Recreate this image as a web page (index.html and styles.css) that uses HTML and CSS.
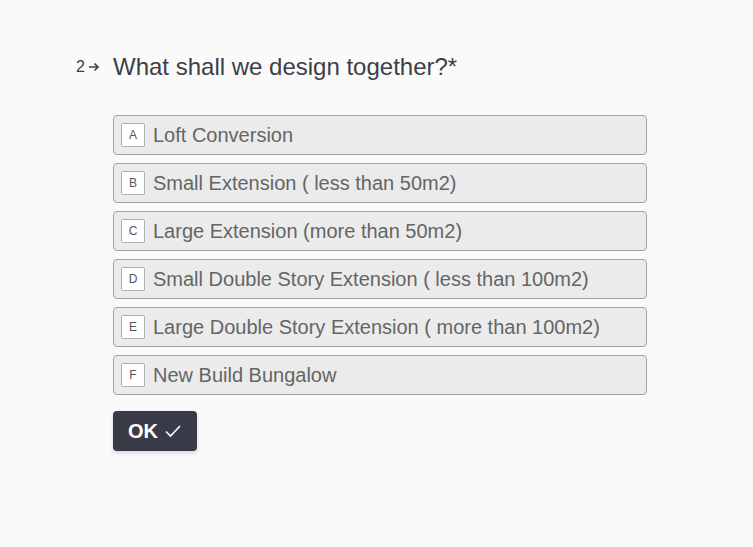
FILE: index.html
```html
<!DOCTYPE html>
<html>
<head>
<meta charset="utf-8">
<link rel="stylesheet" href="styles.css">
</head>
<body>
<div class="form">
  <div class="question">
    <div class="num">2<svg class="arrow" width="12" height="10" viewBox="0 0 12 10"><path d="M1 5h9M6.5 1.5L10 5l-3.5 3.5" fill="none" stroke="#3d3f48" stroke-width="1.6"/></svg></div>
    <div class="title">What shall we design together?*</div>
  </div>
  <div class="options">
    <div class="opt"><span class="key">A</span><span class="label">Loft Conversion</span></div>
    <div class="opt"><span class="key">B</span><span class="label">Small Extension ( less than 50m2)</span></div>
    <div class="opt"><span class="key">C</span><span class="label">Large Extension (more than 50m2)</span></div>
    <div class="opt"><span class="key">D</span><span class="label">Small Double Story Extension ( less than 100m2)</span></div>
    <div class="opt"><span class="key">E</span><span class="label">Large Double Story Extension ( more than 100m2)</span></div>
    <div class="opt"><span class="key">F</span><span class="label">New Build Bungalow</span></div>
  </div>
  <button class="ok">OK<svg width="18" height="14" viewBox="0 0 18 14"><path d="M2 7.5l4.5 4.5L16 2" fill="none" stroke="#fff" stroke-width="1.6"/></svg></button>
</div>
</body>
</html>
```
FILE: styles.css
```css
html, body { margin: 0; padding: 0; background: #fafafa; }
body { font-family: "Liberation Sans", Arial, sans-serif; width: 753px; height: 547px; overflow: hidden; }
.form { padding: 52px 0 0 113px; width: 534px; }
.question { display: flex; align-items: center; position: relative; height: 30px; }
.num { position: absolute; left: -37px; top: 6px; font-size: 16px; color: #3d3f48; display: flex; align-items: center; gap: 3px; }
.title { font-size: 24px; color: #3d3f48; }
.options { margin-top: 33px; display: flex; flex-direction: column; gap: 8px; }
.opt { height: 38px; border: 1px solid #a3a3a3; border-radius: 4px; background: #ebebeb; display: flex; align-items: center; padding-left: 7px; }
.key { width: 22px; height: 22px; border: 1px solid #b0b0b0; background: #fff; border-radius: 2px; font-size: 12px; color: #555; display: flex; align-items: center; justify-content: center; margin-right: 8px; }
.label { font-size: 20px; color: #656565; }
.ok { margin-top: 16px; width: 84px; height: 40px; border: 0; border-radius: 4px; background: #383b47; color: #fff; font-family: inherit; font-weight: bold; font-size: 20px; display: flex; align-items: center; justify-content: center; gap: 6px; padding: 0; box-shadow: 0 2px 4px rgba(0,0,0,0.15); }
```
